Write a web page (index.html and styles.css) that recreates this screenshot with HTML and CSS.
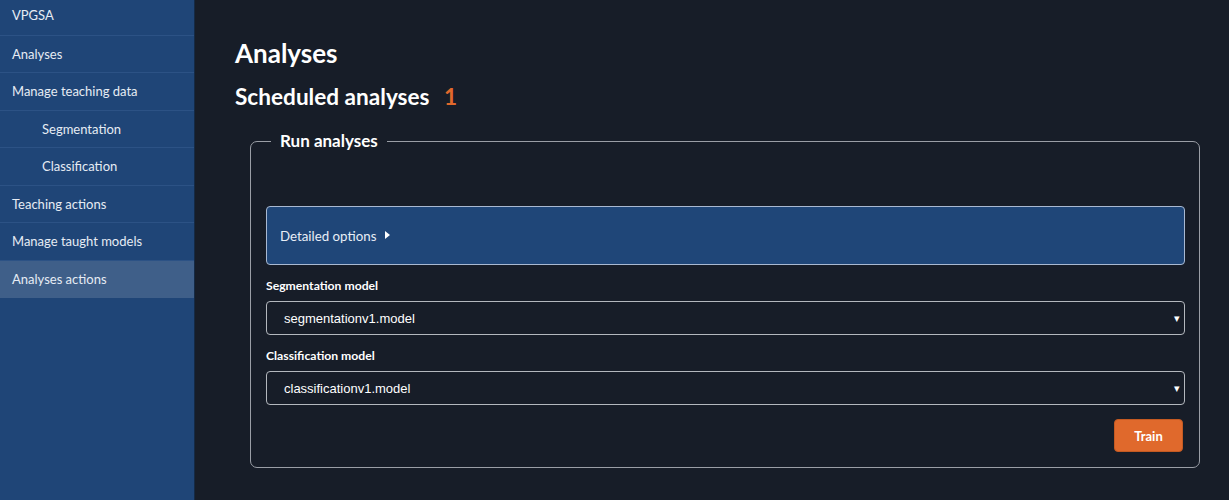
FILE: index.html
```html
<!DOCTYPE html>
<html>
<head>
<meta charset="utf-8">
<link rel="stylesheet" href="styles.css">
</head>
<body>
<div class="app">
  <nav class="sidebar">
    <a class="nav-item first">VPGSA</a>
    <a class="nav-item">Analyses</a>
    <a class="nav-item">Manage teaching data</a>
    <a class="nav-item sub">Segmentation</a>
    <a class="nav-item sub">Classification</a>
    <a class="nav-item">Teaching actions</a>
    <a class="nav-item">Manage taught models</a>
    <a class="nav-item active">Analyses actions</a>
  </nav>
  <main class="main">
    <h1 class="title">Analyses</h1>
    <h2 class="subtitle">Scheduled analyses <span class="count">1</span></h2>
    <fieldset class="panel">
      <legend class="legend">Run analyses</legend>
      <div class="details">Detailed options <span class="caret"></span></div>
      <label class="field-label">Segmentation model</label>
      <div class="select">segmentationv1.model<span class="arrow">▾</span></div>
      <label class="field-label">Classification model</label>
      <div class="select">classificationv1.model<span class="arrow">▾</span></div>
      <div class="actions"><button class="btn">Train</button></div>
    </fieldset>
  </main>
</div>
</body>
</html>
```

FILE: styles.css
```css
* { box-sizing: border-box; }
html, body { margin: 0; height: 100%; }
body {
  background: #171d28;
  font-family: Lato, "Open Sans", sans-serif;
  color: #fff;
}
.app { display: flex; height: 500px; }
.sidebar {
  width: 195px;
  flex: none;
  background: #1f4577;
  display: flex;
  flex-direction: column;
  border-right: 1px solid #152a45;
}
.nav-item {
  display: block;
  font-size: 13px;
  line-height: 18.5px;
  padding: 9px 12px;
  color: #e6ecf4;
  border-bottom: 1px solid #2c5285;
}
.nav-item.first { padding-top: 6px; padding-bottom: 10px; }
.nav-item.sub { padding-left: 42px; }
.nav-item.active { background: #3f5f89; border-bottom: none; height: 37px; }
.main {
  flex: 1;
  padding: 38px 29px 0 40px;
}
.title {
  margin: 0;
  font-size: 26px;
  font-weight: 700;
  line-height: 30px;
}
.subtitle {
  margin: 15px 0 0;
  font-size: 22.6px;
  font-weight: 700;
  line-height: 28px;
}
.count { color: #e0692c; margin-left: 9px; }
.panel {
  margin: 19px 0 0 15px;
  border: 1px solid #9a9ea6;
  border-radius: 7px;
  padding: 54px 14px 15px 15px;
  min-width: 0;
}
.legend {
  font-size: 17px;
  font-weight: 700;
  padding: 0 9px;
  margin-left: 5px;
  line-height: 22px;
}
.details {
  background: #1f4678;
  border: 1px solid #a9b9d1;
  border-radius: 4px;
  height: 59px;
  padding: 0 13px;
  display: flex;
  align-items: center;
  font-size: 13.3px;
  color: #e8eef6;
}
.caret {
  display: inline-block;
  width: 0; height: 0;
  border-top: 4px solid transparent;
  border-bottom: 4px solid transparent;
  border-left: 5px solid #fff;
  margin-left: 9px;
  margin-top: -2px;
}
.field-label {
  display: block;
  font-size: 12.2px;
  font-weight: 700;
  margin: 13px 0 8px;
  line-height: 15px;
}
.select {
  height: 34px;
  border: 1px solid #b4b8be;
  border-radius: 4px;
  display: flex;
  align-items: center;
  justify-content: space-between;
  padding: 0 4px 0 17px;
  font-family: "Liberation Sans", Arial, sans-serif;
  font-size: 13px;
  color: #fff;
}
.arrow { font-size: 11px; }
.actions { display: flex; justify-content: flex-end; margin-top: 14px; padding-right: 2px; }
.btn {
  background: #e0692c;
  color: #fff;
  border: 1px solid #c45a22;
  border-radius: 4px;
  width: 69px;
  height: 33px;
  font-family: Lato, sans-serif;
  font-weight: 700;
  font-size: 13px;
}
```
